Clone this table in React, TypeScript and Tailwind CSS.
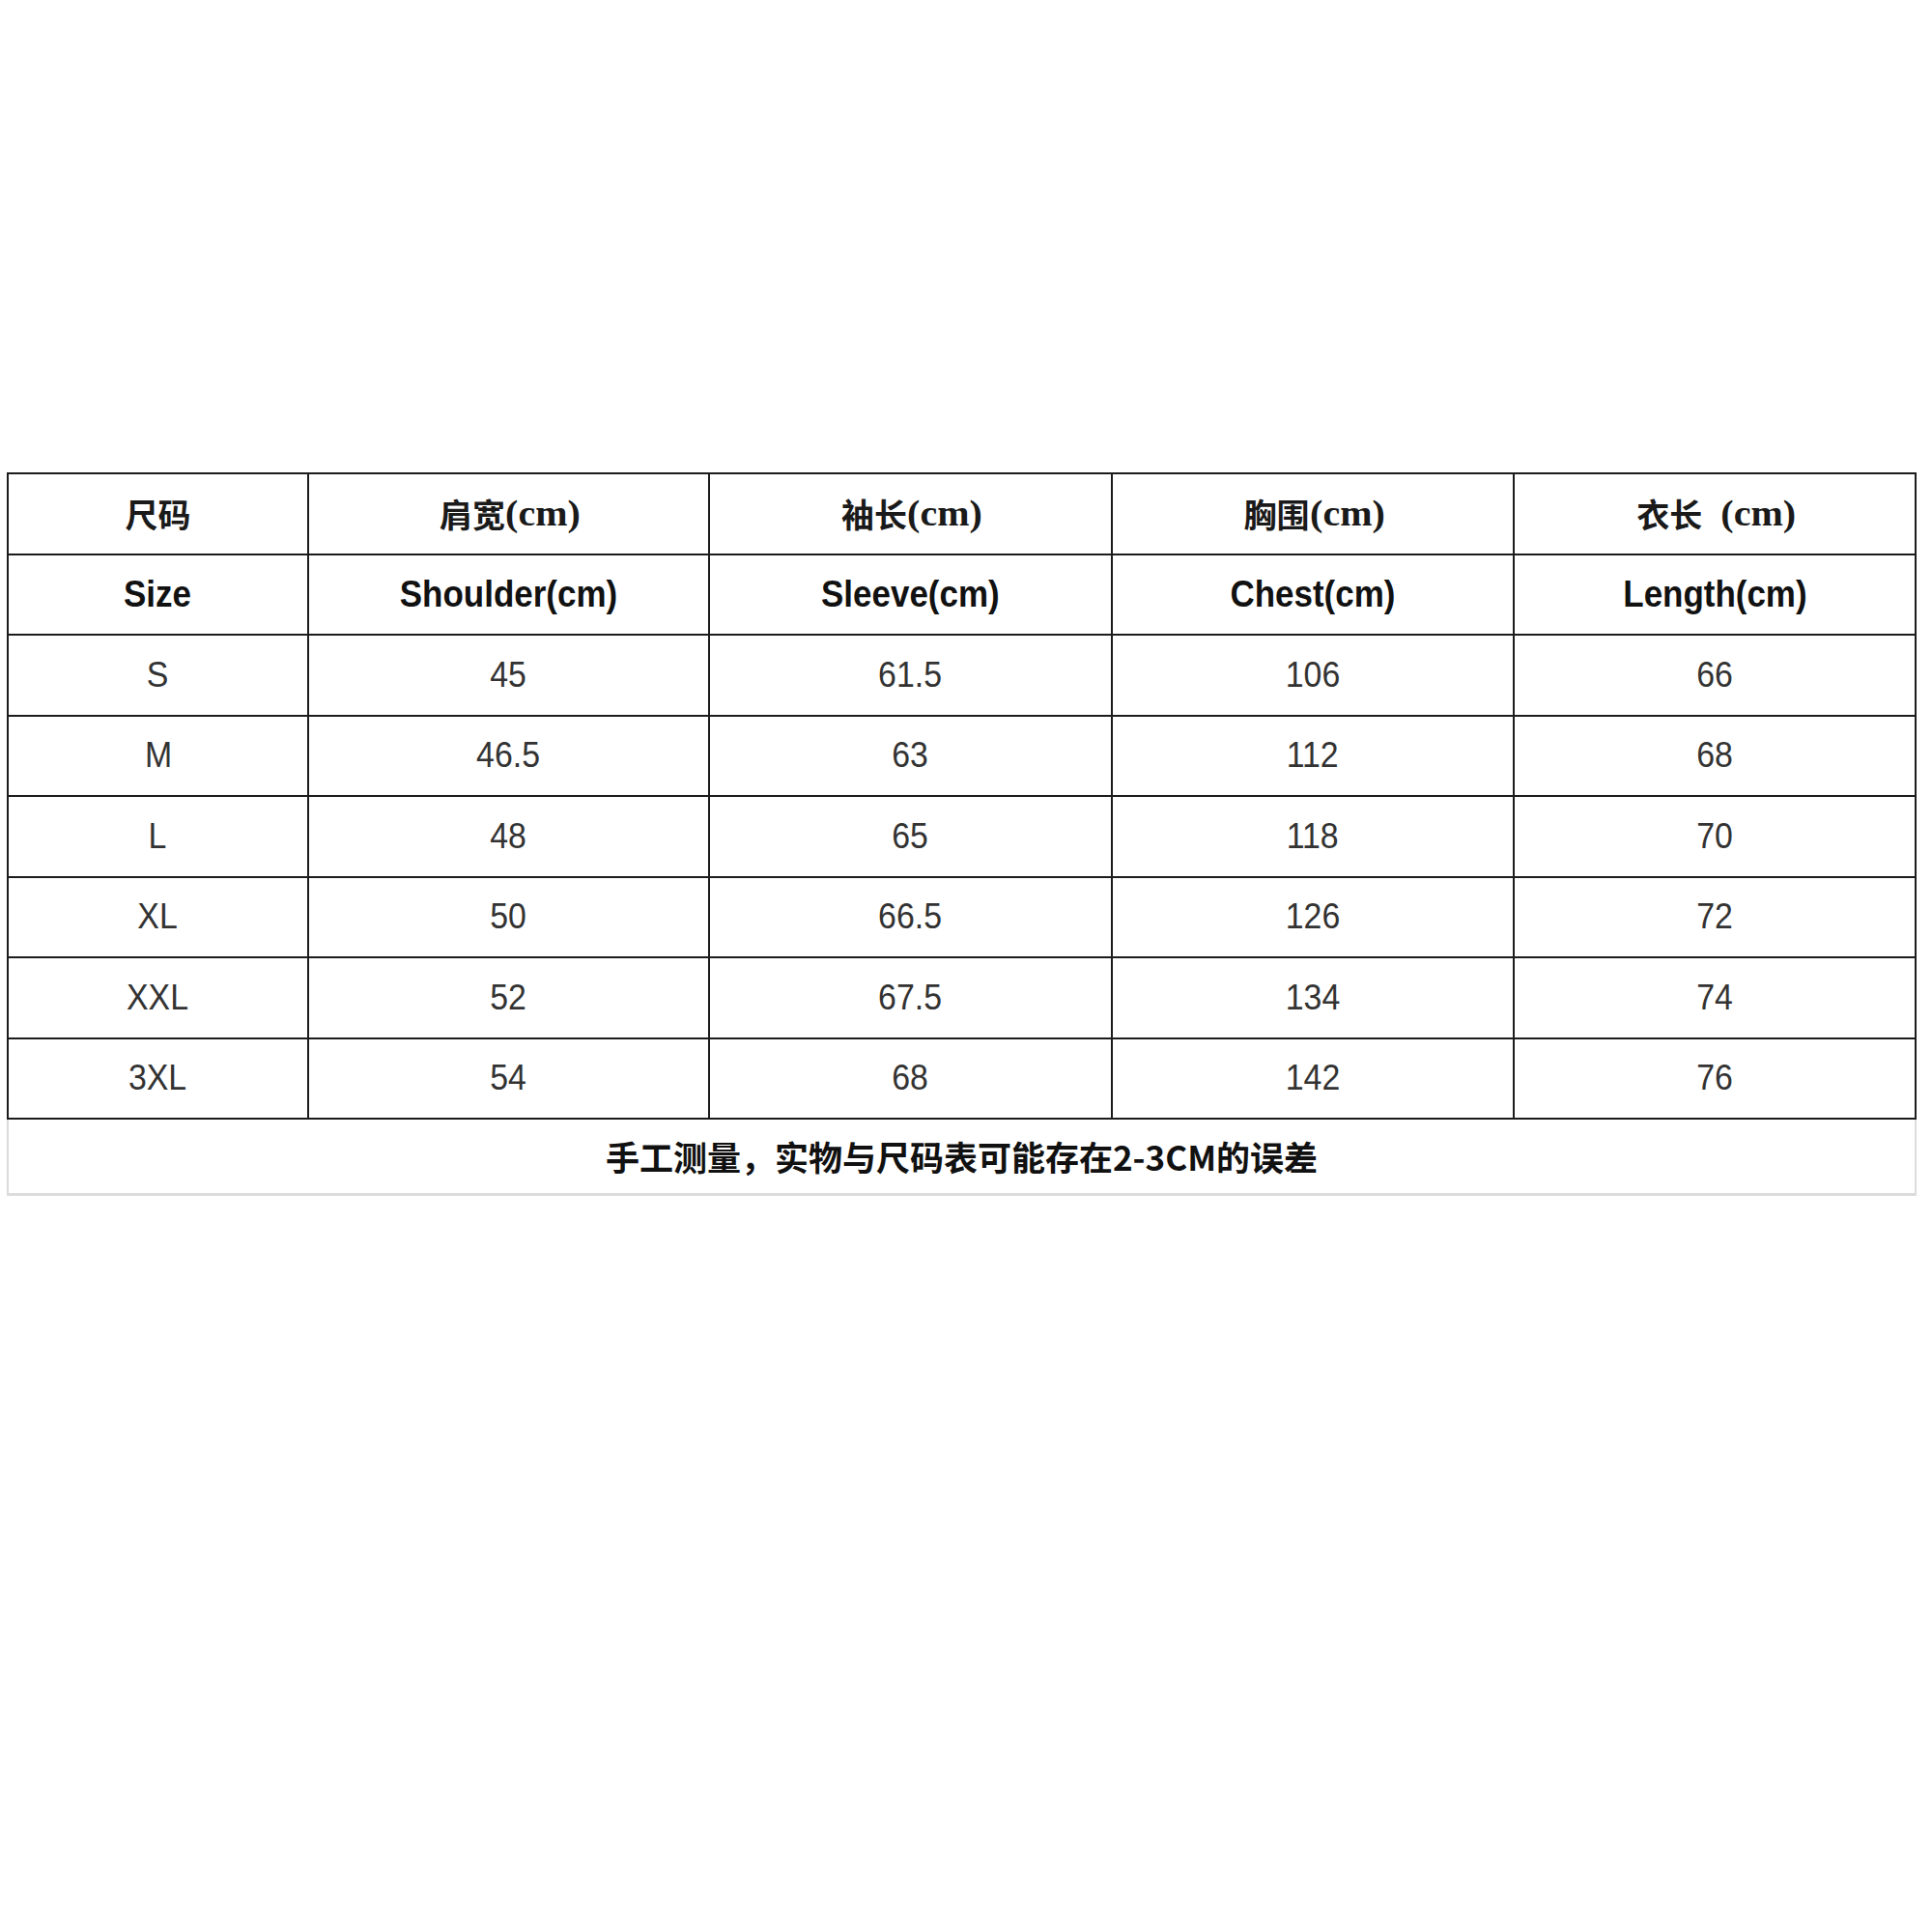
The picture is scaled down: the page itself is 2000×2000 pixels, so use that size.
import React from "react";

const CN_HEADERS = [
  { zh: "尺码", unit: "" },
  { zh: "肩宽", unit: "(cm)" },
  { zh: "袖长", unit: "(cm)" },
  { zh: "胸围", unit: "(cm)" },
  { zh: "衣长", unit: "  (cm)" },
];
const EN_HEADERS = ["Size", "Shoulder(cm)", "Sleeve(cm)", "Chest(cm)", "Length(cm)"];

const ROWS = [
  ["S", "45", "61.5", "106", "66"],
  ["M", "46.5", "63", "112", "68"],
  ["L", "48", "65", "118", "70"],
  ["XL", "50", "66.5", "126", "72"],
  ["XXL", "52", "67.5", "134", "74"],
  ["3XL", "54", "68", "142", "76"],
];

const cjk = "font-['Noto_Sans_CJK_SC',sans-serif]";
const latin = "font-['Liberation_Sans',Arial,sans-serif]";
const serif = "font-['Liberation_Serif','Noto_Sans_CJK_SC',serif]";

export default function App() {
  return (
    <div className="w-[2000px] h-[2000px] bg-white pt-[489px] pl-[7px]">
      <div className="w-[1977px]">
        {/* table grid: dark background shows through the gaps as lines */}
        <div className="grid grid-cols-[309px_413px_415px_414px_414px] auto-rows-[81.5px] gap-[2px] p-[2px] bg-[#1c1c1c]">
          {CN_HEADERS.map((h, i) => (
            <div
              key={"cn" + i}
              className="bg-white flex items-center justify-center text-[#1a1a1a]"
            >
              <span className={`text-[34px] font-semibold ${cjk}`}>{h.zh}</span>
              {h.unit && (
                <span
                  className={`inline-block whitespace-pre text-[37px] font-bold scale-x-[1.08] ml-[3px] ${serif}`}
                >
                  {h.unit}
                </span>
              )}
            </div>
          ))}
          {EN_HEADERS.map((h, i) => (
            <div key={"en" + i} className="bg-white flex items-center justify-center">
              <span
                className={`inline-block scale-x-[0.92] text-[38px] font-bold text-[#111] ${latin}`}
              >
                {h}
              </span>
            </div>
          ))}
          {ROWS.map((row, r) =>
            row.map((cell, c) => (
              <div key={r + "-" + c} className="bg-white flex items-center justify-center">
                <span
                  className={`inline-block scale-x-[0.94] text-[36px] text-[#333] ${latin}`}
                >
                  {cell}
                </span>
              </div>
            ))
          )}
        </div>
        {/* note row */}
        <div className="h-[79px] border-x-2 border-b-[3px] border-[#dcdcdc] flex items-center justify-center">
          <span className={`text-[35px] font-bold text-[#111] ${cjk}`}>
            手工测量，实物与尺码表可能存在2-3CM的误差
          </span>
        </div>
      </div>
    </div>
  );
}
